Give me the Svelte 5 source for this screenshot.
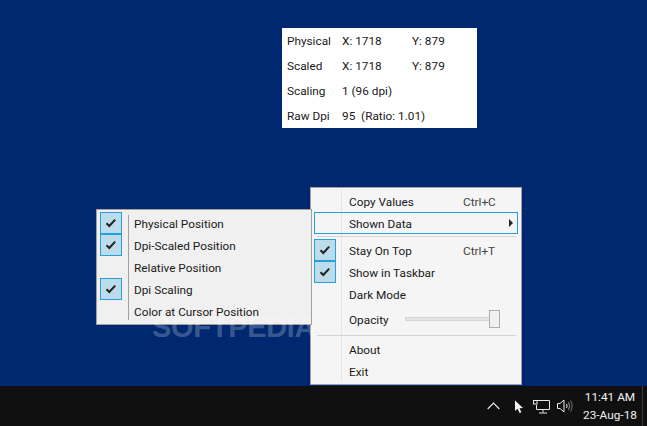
<script>
  const info = [
    { label: 'Physical', x: 'X: 1718', y: 'Y: 879' },
    { label: 'Scaled', x: 'X: 1718', y: 'Y: 879' },
    { label: 'Scaling', value: '1 (96 dpi)' },
    { label: 'Raw Dpi', value: '95  (Ratio: 1.01)' },
  ]

  const submenu = [
    { text: 'Physical Position', checked: true },
    { text: 'Dpi-Scaled Position', checked: true },
    { text: 'Relative Position', checked: false },
    { text: 'Dpi Scaling', checked: true },
    { text: 'Color at Cursor Position', checked: false },
  ]
</script>

{#snippet check(on)}
  <span class="icon" class:on>
    {#if on}
      <svg width="12" height="10" viewBox="0 0 12 10">
        <path d="M1.5 5.2 L4.3 8 L10.2 1.6" fill="none" stroke="#222" stroke-width="2" />
      </svg>
    {/if}
  </span>
{/snippet}

{#snippet row(text, on, shortcut)}
  <div class="row">
    {@render check(on)}
    <span class="label">{text}</span>
    {#if shortcut}<span class="shortcut">{shortcut}</span>{/if}
  </div>
{/snippet}

<div class="screen">
  <div class="desktop">
    <div class="info">
      {#each info as item}
        <div class="info-row">
          <span class="info-label">{item.label}</span>
          {#if item.value}
            <span class="info-value">{item.value}</span>
          {:else}
            <span class="info-x">{item.x}</span>
            <span>{item.y}</span>
          {/if}
        </div>
      {/each}
    </div>

    <div class="menu main">
      {@render row('Copy Values', false, 'Ctrl+C')}
      <div class="row active">
        {@render check(false)}
        <span class="label">Shown Data</span>
        <span class="arrow"></span>
      </div>
      <div class="sep"></div>
      {@render row('Stay On Top', true, 'Ctrl+T')}
      {@render row('Show in Taskbar', true)}
      {@render row('Dark Mode', false)}
      <div class="row opacity">
        {@render check(false)}
        <span class="label">Opacity</span>
        <div class="slider"><span class="thumb"></span></div>
      </div>
      <div class="sep"></div>
      {@render row('About', false)}
      {@render row('Exit', false)}
    </div>

    <div class="menu sub">
      {#each submenu as item}
        {@render row(item.text, item.checked)}
      {/each}
    </div>

    <div class="watermark">SOFTPEDIA<sup>®</sup></div>
  </div>

  <div class="taskbar">
    <svg class="chevron" width="13" height="8" viewBox="0 0 13 8">
      <path d="M0.7 7 L6.5 1.2 L12.3 7" fill="none" stroke="#e8e8e8" stroke-width="1.2" />
    </svg>
    <svg class="cursor" width="10" height="14" viewBox="0 0 10 14">
      <path d="M1 0.5 L1 11 L3.6 8.8 L5.6 13 L7.4 12.2 L5.5 8.2 L9 8 Z" fill="#f4f4f4" />
    </svg>
    <svg class="network" width="17" height="15" viewBox="0 0 17 15">
      <g fill="none" stroke="#e8e8e8" stroke-width="1">
        <path d="M3.5 1.5 H16.5 V10.5 H3.5 V6" />
        <rect x="0.5" y="1.5" width="3.5" height="3.5" />
        <path d="M10 10.5 V13.5 M6 14 H14" />
      </g>
    </svg>
    <svg class="speaker" width="17" height="14" viewBox="0 0 17 14">
      <g fill="none" stroke="#e8e8e8" stroke-width="1">
        <path d="M0.5 4.5 H3 L7 1 V13 L3 9.5 H0.5 Z" />
        <path d="M9.5 5 Q10.8 7 9.5 9" />
        <path d="M11.5 3.2 Q13.8 7 11.5 10.8" stroke="#9a9a9a" />
        <path d="M13.5 1.5 Q16.8 7 13.5 12.5" stroke="#777" />
      </g>
    </svg>
    <div class="clock">
      <span>11:41 AM</span>
      <span>23-Aug-18</span>
    </div>
    <div class="show-desktop"></div>
  </div>
</div>

<style>
  :global(body) {
    margin: 0;
  }

  .screen {
    width: 647px;
    height: 426px;
    display: flex;
    flex-direction: column;
    overflow: hidden;
    font-family: Roboto, "Open Sans", sans-serif;
    font-size: 11.8px;
    color: #1a1a1a;
  }

  .desktop {
    flex: 1;
    position: relative;
    background: #002870;
  }

  /* floating windows on the desktop */
  .info {
    position: absolute;
    left: 282px;
    top: 28px;
    width: 195px;
    height: 100px;
    box-sizing: border-box;
    padding: 0 5px;
    background: #fff;
    display: flex;
    flex-direction: column;
    justify-content: space-around;
  }

  .info-row {
    display: flex;
    height: 25px;
    align-items: center;
    white-space: pre;
  }

  .info-label {
    width: 55px;
  }

  .info-x {
    width: 70px;
  }

  .menu {
    position: absolute;
    box-sizing: border-box;
    border: 1px solid #a0a0a0;
    padding: 2px 3px;
    display: flex;
    flex-direction: column;
  }

  .menu::before {
    content: '';
    position: absolute;
    top: 2px;
    bottom: 2px;
  }

  .main {
    left: 310px;
    top: 187px;
    width: 212px;
    height: 198px;
    background: #f5f5f5;
  }

  .main::before {
    left: 30px;
    width: 1px;
    background: #e4e4e4;
  }

  .sub {
    left: 96px;
    top: 209px;
    width: 216px;
    height: 116px;
    background: #f0f0f0;
  }

  .sub::before {
    left: 31px;
    top: 5px;
    bottom: 4px;
    width: 1px;
    background: #a0a0a0;
  }

  .row {
    position: relative;
    display: flex;
    align-items: center;
    height: 22px;
    flex: none;
    box-sizing: border-box;
  }

  .active {
    outline: 1px solid #26a0da;
    outline-offset: -1px;
  }

  .icon {
    flex: none;
    width: 22px;
    height: 22px;
    box-sizing: border-box;
    margin-right: 13px;
    display: flex;
    align-items: center;
    justify-content: center;
  }

  .icon.on {
    background: #bcdcec;
    border: 1px solid #26a0da;
  }

  .sub .icon {
    margin-right: 12px;
  }

  .label {
    flex: 1;
    white-space: nowrap;
    padding-top: 1px;
  }

  .shortcut {
    width: 55px;
    flex: none;
    color: #444;
    padding-top: 1px;
  }

  .arrow {
    width: 0;
    height: 0;
    margin-right: 5px;
    border-left: 4px solid #222;
    border-top: 4px solid transparent;
    border-bottom: 4px solid transparent;
  }

  .sep {
    height: 1px;
    flex: none;
    margin: 2px 2px 2px 3px;
    background: #d4d4d4;
    position: relative;
  }

  .opacity {
    height: 28px;
  }

  .opacity .label {
    flex: none;
    width: 56px;
  }

  .slider {
    position: relative;
    width: 93px;
    height: 2px;
    background: #e2e5e2;
    border: 1px solid #d6d6d6;
  }

  /* slider thumb sits over its track */
  .thumb {
    position: absolute;
    right: -1px;
    top: -8px;
    width: 11px;
    height: 18px;
    box-sizing: border-box;
    background: #f0f0f0;
    border: 1px solid #adadad;
  }

  .watermark {
    position: absolute;
    left: 152px;
    top: 315px;
    font-family: "Liberation Sans", sans-serif;
    font-weight: 700;
    font-size: 29px;
    line-height: 24px;
    letter-spacing: -0.3px;
    color: rgba(255, 255, 255, 0.24);
    pointer-events: none;
    white-space: nowrap;
  }

  .watermark sup {
    font-size: 9px;
    font-weight: 400;
    vertical-align: 13px;
    line-height: 0;
  }

  .taskbar {
    flex: none;
    height: 40px;
    background: #101010;
    display: flex;
    align-items: center;
    color: #f0f0f0;
    padding-left: 487px;
    box-sizing: border-box;
  }

  .chevron {
    flex: none;
    margin-right: 14px;
    margin-top: -1px;
  }

  .cursor {
    flex: none;
    margin-right: 9px;
    margin-top: 1px;
  }

  .network {
    flex: none;
    margin-right: 7px;
    margin-top: 1px;
  }

  .speaker {
    flex: none;
    margin-right: 8px;
  }

  .clock {
    width: 56px;
    flex: none;
    display: flex;
    flex-direction: column;
    align-items: center;
    gap: 2px;
    line-height: 16px;
    white-space: nowrap;
  }

  .show-desktop {
    flex: none;
    width: 1px;
    height: 40px;
    margin-left: 4px;
    background: #3a3a3a;
  }
</style>
